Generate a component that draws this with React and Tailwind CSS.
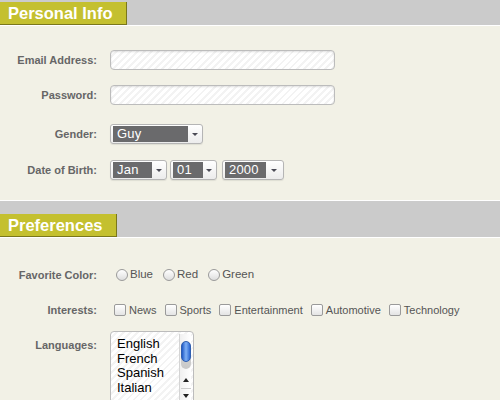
const label = "w-[97px] shrink-0 text-right text-[11px] font-bold text-[#666] leading-none";
const stripes =
  "bg-[repeating-linear-gradient(135deg,#ffffff_0px,#ffffff_3px,#f3f3f3_3px,#f3f3f3_5px)]";

function Tab({ children, width }) {
  return (
    <div
      className={`h-[23px] ${width} bg-[#c4c02f] border-r border-b border-[#7a771c] pl-[8px] flex items-center text-white font-bold text-[16.5px] leading-none`}
    >
      {children}
    </div>
  );
}

function TextInput() {
  return (
    <div
      className={`ml-[13px] w-[225px] h-[20px] rounded-[4px] border border-[#bcbcbc] shadow-[inset_0_1px_2px_rgba(0,0,0,0.12)] ${stripes}`}
    />
  );
}

function Select({ value, width, fill, className = "" }) {
  return (
    <div
      className={`h-[20px] ${width} ${className} rounded-[3px] border border-[#b5b5b5] bg-gradient-to-b from-white to-[#ececec] flex items-center pl-[2px] pr-[1px] shadow-[0_1px_1px_rgba(0,0,0,0.08)]`}
    >
      <div
        className={`h-[16px] ${fill} bg-[#6a6a6c] text-white text-[13px] leading-[16px] pl-[4px] tracking-[0.2px]`}
      >
        {value}
      </div>
      <div className="flex-1 flex items-center justify-center">
        <div className="w-0 h-0 border-l-[3px] border-r-[3px] border-t-[3px] border-l-transparent border-r-transparent border-t-[#4a4a55]" />
      </div>
    </div>
  );
}

function Radio({ children }) {
  return (
    <div className="flex items-center">
      <div className="w-[12px] h-[12px] rounded-full border border-[#9a9a9a] bg-gradient-to-b from-white to-[#dedede]" />
      <span className="ml-[2px] mr-[10px] text-[11.5px] text-[#555]">{children}</span>
    </div>
  );
}

function Check({ children }) {
  return (
    <div className="flex items-center">
      <div className="w-[12px] h-[12px] rounded-[2px] border border-[#9a9a9a] bg-gradient-to-b from-white to-[#e4e4e4]" />
      <span className="ml-[3px] mr-[8px] text-[11px] text-[#555]">{children}</span>
    </div>
  );
}

export default function App() {
  return (
    <div
      className="w-[500px] h-[400px] overflow-hidden bg-[#f2f1e6]"
      style={{ fontFamily: '"Liberation Sans", Arial, sans-serif' }}
    >
      {/* Personal Info */}
      <div className="h-[26px] bg-[#cbcbcb] border-b border-white flex items-end">
        <Tab width="w-[127px]">Personal Info</Tab>
      </div>
      <div className="pt-[24px] pb-[20px] flex flex-col">
        <div className="flex items-center h-[20px]">
          <div className={label}>Email Address:</div>
          <TextInput />
        </div>
        <div className="flex items-center h-[20px] mt-[15px]">
          <div className={label}>Password:</div>
          <TextInput />
        </div>
        <div className="flex items-center h-[20px] mt-[19px]">
          <div className={label}>Gender:</div>
          <Select value="Guy" width="w-[93px]" fill="w-[75px]" className="ml-[13px]" />
        </div>
        <div className="flex items-center h-[20px] mt-[16px]">
          <div className={label}>Date of Birth:</div>
          <Select value="Jan" width="w-[57px]" fill="w-[39px]" className="ml-[13px]" />
          <Select value="01" width="w-[47px]" fill="w-[30px]" className="ml-[3px]" />
          <Select value="2000" width="w-[62px]" fill="w-[41px]" className="ml-[5px]" />
        </div>
      </div>

      {/* Preferences */}
      <div className="border-t border-[#666] h-[38px] bg-[#cbcbcb] border-b border-white flex items-end">
        <Tab width="w-[117px]">Preferences</Tab>
      </div>
      <div className="pt-[27px] flex flex-col">
        <div className="flex items-center h-[20px]">
          <div className={label}>Favorite Color:</div>
          <div className="ml-[19px] flex items-center">
            <Radio>Blue</Radio>
            <Radio>Red</Radio>
            <Radio>Green</Radio>
          </div>
        </div>
        <div className="flex items-center h-[20px] mt-[15px]">
          <div className={label}>Interests:</div>
          <div className="ml-[17px] flex items-center">
            <Check>News</Check>
            <Check>Sports</Check>
            <Check>Entertainment</Check>
            <Check>Automotive</Check>
            <Check>Technology</Check>
          </div>
        </div>
        <div className="flex items-start mt-[11px]">
          <div className={`${label} pt-[9px]`}>Languages:</div>
          <div
            className={`ml-[13px] w-[84px] h-[80px] rounded-[4px] border border-[#bcbcbc] ${stripes} flex pl-[6px] pt-[5px] pr-[2px]`}
          >
            <div className="flex-1 text-[13px] leading-[14.5px] text-black">
              <div>English</div>
              <div>French</div>
              <div>Spanish</div>
              <div>Italian</div>
            </div>
            <div className="w-[12px] -mt-[3px] mb-[4px] border-l border-[#d4d4d4] bg-gradient-to-r from-[#f0f0f0] to-white flex flex-col items-center">
              <div className="mt-[7px] w-[10px] h-[28px] rounded-full bg-gradient-to-b from-[#dcdcdc] to-[#c8c8c8] relative">
                <div className="absolute top-0 left-0 w-[10px] h-[21px] rounded-full border border-[#2f5fb0] bg-gradient-to-r from-[#1e58c6] via-[#7fb0f5] to-[#2a66d2]" />
              </div>
              <div className="mt-[9px] w-0 h-0 border-l-[3px] border-r-[3px] border-b-[4px] border-l-transparent border-r-transparent border-b-[#222]" />
              <div className="mt-[6px] w-[10px] border-t border-[#ccc]" />
              <div className="mt-[5px] w-0 h-0 border-l-[3px] border-r-[3px] border-t-[4px] border-l-transparent border-r-transparent border-t-[#222]" />
            </div>
          </div>
        </div>
      </div>
    </div>
  );
}
